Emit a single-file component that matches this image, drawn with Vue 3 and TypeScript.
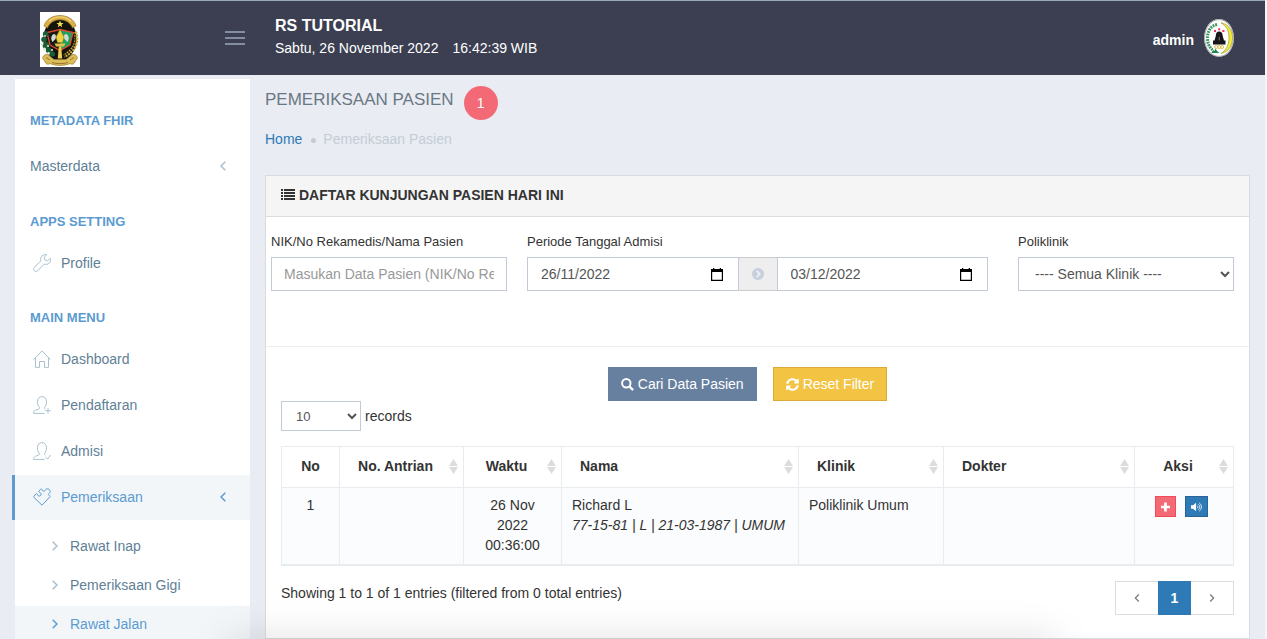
<script setup lang="ts">
import { ref } from 'vue'

type IconName = 'home' | 'follow' | 'check' | 'puzzle' | 'wrench'

interface MenuItem {
  label: string
  icon?: IconName
  arrow?: boolean
  active?: boolean
  children?: { label: string; active?: boolean }[]
}

interface MenuGroup {
  title: string
  items: MenuItem[]
}

const userShape =
  'M6.400 11.300C5 10 4.500 8 4.500 5.800 4.500 2.600 6.300.6 9 .6s4.500 2 4.500 5.200c0 2.200-.5 4.200-1.900 5.500-.4.900 0 1.500.8 1.800M6.400 11.300c.4.900 0 1.500-.8 1.800l-2.900 1.100C1.200 14.700.6 15.600.6 17.400h11'

const iconPaths: Record<IconName, string> = {
  home: 'M.6 9.600 9 .9l8.400 8.700M2.500 8v9.400h4V11.500h5v5.900h4V8',
  follow: userShape + 'M15 12v5.400M12.300 14.700h5.400',
  check: userShape + 'M12.500 14.900l2 2.300 3.100-4.200',
  wrench:
    'M13.600.7C11.300.2 8.700 1.300 7.900 3.700c-.4 1.100-.3 2.200 0 3.200L1.100 13.500c-1.800 2.200 1.200 5.200 3.400 3.400L11.200 10.100c1.700.7 3.700.3 5-1 1.300-1.300 1.600-3.100 1.100-4.700l-2.700 2.300-2.700-.7-.7-2.600z',
  puzzle:
    'M.8 8.300 3 6c.7-.6 1.300-.2 1.500.6.3 1.600 2.300 1.900 3.200.8.900-1 .4-2.600-1-2.900-.8-.2-1.300-.8-.7-1.500L7.600 1.300c.7-.6 1.400-.2 1.600.6.3 1.500 2.100 1.700 2.900.6.600-1.500 2.300-2.300 3.900-1.200 1.700 1.300 1.400 3.300 0 4.200-.9.700-.7 1.500.2 1.800.9.200 1.300.9.700 1.600L9 17.200.9 9.300c-.4-.3-.4-.7-.1-1z',
}

const menu: MenuGroup[] = [
  { title: 'METADATA FHIR', items: [{ label: 'Masterdata', arrow: true }] },
  { title: 'APPS SETTING', items: [{ label: 'Profile', icon: 'wrench' }] },
  {
    title: 'MAIN MENU',
    items: [
      { label: 'Dashboard', icon: 'home' },
      { label: 'Pendaftaran', icon: 'follow' },
      { label: 'Admisi', icon: 'check' },
      {
        label: 'Pemeriksaan',
        icon: 'puzzle',
        arrow: true,
        active: true,
        children: [
          { label: 'Rawat Inap' },
          { label: 'Pemeriksaan Gigi' },
          { label: 'Rawat Jalan', active: true },
        ],
      },
    ],
  },
]

const columns = [
  { key: 'no', label: 'No', sortable: false },
  { key: 'antrian', label: 'No. Antrian', sortable: true },
  { key: 'waktu', label: 'Waktu', sortable: true },
  { key: 'nama', label: 'Nama', sortable: true },
  { key: 'klinik', label: 'Klinik', sortable: true },
  { key: 'dokter', label: 'Dokter', sortable: true },
  { key: 'aksi', label: 'Aksi', sortable: true },
]

const visits = [
  {
    no: 1,
    queue: '',
    time: '26 Nov 2022 00:36:00',
    name: 'Richard L',
    detail: '77-15-81 | L | 21-03-1987 | UMUM',
    clinic: 'Poliklinik Umum',
    doctor: '',
  },
]

const keyword = ref('')
const startDate = ref('26/11/2022')
const endDate = ref('03/12/2022')
const clinic = ref('all')
const pageSize = ref('10')
</script>

<template>
  <div class="shell">
    <header class="topbar">
      <div class="brand">
        <svg class="crest" viewBox="0 0 40 55" role="img" aria-label="Logo">
          <rect width="40" height="55" fill="#fff" />
          <ellipse cx="20" cy="27" rx="16.500" ry="22" fill="#15140f" />
          <path d="M4 14C8 0 32 0 36 14l-3.500 2C28 5 12 5 7.500 16z" fill="#dcae45" stroke="#8a6a1c" stroke-width=".6" />
          <path d="M9 9.500C14 3.500 26 3.500 31 9.500" fill="none" stroke="#f3d988" stroke-width="1.200" />
          <path d="M20 8.500l1 2.400 2.500.2-2 1.600.7 2.500-2.200-1.400-2.200 1.400.7-2.500-2-1.600 2.500-.2z" fill="#f3df52" />
          <path d="M20 17.500 33 20.500 30 33 20 38.500 10 33 7 20.500z" fill="#191a18" />
          <path d="M20 17.500 33 20.500 30 33 20 38.500z" fill="#1fa05c" />
          <path d="M20 17.500 33 20.500 30 33 20 38.500 10 33 7 20.500z" fill="none" stroke="#dd4a2f" stroke-width="1.300" />
          <path d="M12.500 30c-2-3-1.500-7 1.500-8 2 0 2.500 3 1.500 5zM27.500 30c2-3 1.500-7-1.500-8-2 0-2.500 3-1.500 5z" fill="#d3dad6" />
          <path d="M20 17.500 24 25l-1.500 5.500h-5L16 25z" fill="#f0d33f" stroke="#9a7d20" stroke-width=".5" />
          <path d="M14.500 31.500h11l-1.500 3h-8z" fill="#e3c04a" />
          <path d="M18.800 34.500h2.400l1 12h-4.400z" fill="#f0cf55" />
          <g fill="#1c5e38">
            <circle cx="5.500" cy="22" r="2.700" /><circle cx="4" cy="27.500" r="2.800" /><circle cx="6" cy="33.500" r="3.400" />
            <circle cx="9" cy="38.500" r="3" /><circle cx="12.500" cy="42" r="2.500" />
          </g>
          <g fill="#dfe9db">
            <circle cx="2" cy="32" r="1.400" /><circle cx="4.500" cy="37" r="1.600" /><circle cx="8" cy="34" r="1" />
            <circle cx="8.500" cy="41.500" r="1.400" /><circle cx="5" cy="24" r=".9" /><circle cx="12" cy="38" r="1" />
          </g>
          <path d="M35 20c3 7 1 14-4 19-2 2-4 4-7 5" fill="none" stroke="#c9a93b" stroke-width="4" stroke-dasharray="2 .9" />
          <path d="M34.500 21c2 7 1 12-3 17-2 2-4 4-7 5.500" fill="none" stroke="#2a2610" stroke-width=".9" />
          <path d="M4.500 43c4-2 5 2 9.500 4.500h12C30.500 45 31.500 41 35.500 43c3 2 1.500 5-.5 6 0 3-3 4-5 2.500-5 2.500-15 2.500-20 0C8 53 5 52 5 49c-2-1-3.500-4-.5-6z" fill="#dcbd5a" stroke="#94752a" stroke-width=".7" />
          <path d="M12 50.500c5 1.500 11 1.500 16 0M6 45.500l4 2.500M34 45.500l-4 2.500" fill="none" stroke="#81651f" stroke-width=".8" />
        </svg>
        <button class="burger" type="button" aria-label="Toggle menu">
          <span></span><span></span><span></span>
        </button>
      </div>
      <div class="hospital">
        <strong>RS TUTORIAL</strong>
        <p><span>Sabtu, 26 November 2022</span><span>16:42:39 WIB</span></p>
      </div>
      <a class="user" href="#">
        <strong>admin</strong>
        <svg class="avatar" viewBox="0 0 30 38" aria-hidden="true">
          <ellipse cx="15" cy="19" rx="15" ry="19" fill="#fff" />
          <ellipse cx="15" cy="19" rx="14.400" ry="18.400" fill="none" stroke="#555" stroke-width=".5" />
          <path d="M13 5.500C6 7 3.500 13 3.500 19s2 9 5 12" fill="none" stroke="#3a9763" stroke-width="3" stroke-dasharray="1.800 .9" />
          <path d="M17 3.800C25 5 28.500 12 28.500 19S25 33 17 34.500c4-2.500 8-7.500 8-15.500S22 7 17 3.800z" fill="#f1ea3c" stroke="#8d8a2a" stroke-width=".6" />
          <path d="M7.500 34l1.500-3 1.500 1 1-2.500 1.500 2.500 2.500 2z" fill="#17874a" />
          <path d="M10 12h2M14.200 10.300h2M18.400 12h2" stroke="#ee3350" stroke-width="1.900" />
          <path d="M15.200 12.500c2.200 0 3.300 1.400 3.500 4.500l1.300 4.500h1.500v4H9v-4h1.500l1.300-4.500c.2-3.100 1.200-4.500 3.400-4.500z" fill="#15151a" />
          <path d="M15.200 18v3.500" stroke="#999" stroke-width=".8" />
          <g fill="none" stroke="#d8b73c" stroke-width=".9">
            <circle cx="12.300" cy="28" r="1.500" /><circle cx="15.200" cy="28" r="1.500" /><circle cx="18.100" cy="28" r="1.500" />
          </g>
        </svg>
      </a>
    </header>

    <div class="body">
      <nav class="sidebar" aria-label="Menu">
        <section v-for="group in menu" :key="group.title" class="group">
          <h3>{{ group.title }}</h3>
          <ul>
            <li v-for="item in group.items" :key="item.label">
              <a href="#" class="item" :class="{ active: item.active }">
                <svg v-if="item.icon" class="item-icon" viewBox="0 0 18 18" aria-hidden="true">
                  <path :d="iconPaths[item.icon]" />
                </svg>
                <span>{{ item.label }}</span>
                <svg v-if="item.arrow" class="arrow" viewBox="0 0 6 10" aria-hidden="true">
                  <path d="M5.300.8 1 5l4.300 4.200" />
                </svg>
              </a>
              <ul v-if="item.children" class="submenu">
                <li v-for="child in item.children" :key="child.label">
                  <a href="#" class="subitem" :class="{ active: child.active }">
                    <svg class="bullet" viewBox="0 0 6 10" aria-hidden="true">
                      <path d="M.7.8 5 5 .7 9.200" />
                    </svg>
                    {{ child.label }}
                  </a>
                </li>
              </ul>
            </li>
          </ul>
        </section>
      </nav>

      <main class="content">
        <div class="title-row">
          <h1>PEMERIKSAAN PASIEN</h1>
          <span class="count">1</span>
        </div>
        <nav class="crumbs" aria-label="Breadcrumb">
          <a href="#">Home</a>
          <i class="dot"></i>
          <span>Pemeriksaan Pasien</span>
        </nav>

        <section class="panel">
          <h2 class="panel-head">
            <svg viewBox="0 0 14 12" aria-hidden="true">
              <path d="M0 0h2v2H0zM3 0h11v2H3zM0 3h2v2H0zM3 3h11v2H3zM0 6h2v2H0zM3 6h11v2H3zM0 9h2v2H0zM3 9h11v2H3z" />
            </svg>
            DAFTAR KUNJUNGAN PASIEN HARI INI
          </h2>

          <form class="filters" @submit.prevent>
            <div class="field">
              <label for="keyword">NIK/No Rekamedis/Nama Pasien</label>
              <input id="keyword" v-model="keyword" class="control" type="text" placeholder="Masukan Data Pasien (NIK/No Rekamedis/Nama)" />
            </div>
            <div class="field">
              <label for="start">Periode Tanggal Admisi</label>
              <div class="range">
                <div class="date">
                  <input id="start" v-model="startDate" type="text" />
                  <button type="button" aria-label="Pilih tanggal awal">
                    <svg viewBox="0 0 12 13"><path d="M2 0h1.300v1h5.400V0H10v1h2v12H0V1h2zM1.200 4v7.800h9.600V4z" fill-rule="evenodd" /></svg>
                  </button>
                </div>
                <span class="between">
                  <svg viewBox="0 0 12 12" aria-hidden="true">
                    <circle cx="6" cy="6" r="6" fill="#c6cfdc" />
                    <path d="M4.700 3 7.700 6l-3 3" fill="none" stroke="#eee" stroke-width="1.800" />
                  </svg>
                </span>
                <div class="date">
                  <input v-model="endDate" type="text" aria-label="Tanggal akhir" />
                  <button type="button" aria-label="Pilih tanggal akhir">
                    <svg viewBox="0 0 12 13"><path d="M2 0h1.300v1h5.400V0H10v1h2v12H0V1h2zM1.200 4v7.800h9.600V4z" fill-rule="evenodd" /></svg>
                  </button>
                </div>
              </div>
            </div>
            <div class="field clinic">
              <label for="clinic">Poliklinik</label>
              <select id="clinic" v-model="clinic" class="control">
                <option value="all">---- Semua Klinik ----</option>
              </select>
            </div>
          </form>

          <div class="actions">
            <button type="button" class="btn search">
              <svg viewBox="0 0 13 13" aria-hidden="true">
                <circle cx="5.300" cy="5.300" r="4.200" fill="none" stroke="#fff" stroke-width="2" />
                <path d="M8.500 8.500l3.600 3.600" stroke="#fff" stroke-width="2.400" />
              </svg>
              Cari Data Pasien
            </button>
            <button type="button" class="btn reset">
              <svg viewBox="0 0 512 512" aria-hidden="true">
                <path fill="#fff" d="M370.720 133.280C339.458 104.008 298.888 87.962 255.848 88c-77.458.068-144.328 53.178-162.791 126.850-1.344 5.363-6.122 9.150-11.651 9.150H24.103c-7.498 0-13.194-6.807-11.807-14.176C33.933 94.924 134.813 8 256 8c66.448 0 126.791 26.136 171.315 68.685L463.030 40.970C478.149 25.851 504 36.559 504 57.941V192c0 13.255-10.745 24-24 24H345.941c-21.382 0-32.090-25.851-16.971-40.971l41.750-41.749zM32 296h134.059c21.382 0 32.090 25.851 16.971 40.971l-41.750 41.750c31.262 29.273 71.835 45.319 114.876 45.280 77.418-.070 144.315-53.144 162.787-126.849 1.344-5.363 6.122-9.150 11.651-9.150h57.304c7.498 0 13.194 6.807 11.807 14.176C478.067 417.076 377.187 504 256 504c-66.448 0-126.791-26.136-171.315-68.685L48.970 471.030C33.851 486.149 8 475.441 8 454.059V320c0-13.255 10.745-24 24-24z" />
              </svg>
              Reset Filter
            </button>
          </div>

          <div class="listing">
            <label class="length">
              <select v-model="pageSize">
                <option>10</option>
                <option>25</option>
                <option>50</option>
              </select>
              records
            </label>

            <table>
              <colgroup>
                <col v-for="column in columns" :key="column.key" :class="'w-' + column.key" />
              </colgroup>
              <thead>
                <tr>
                  <th v-for="column in columns" :key="column.key" scope="col" :class="['c-' + column.key, { sortable: column.sortable }]">
                    {{ column.label }}
                    <svg v-if="column.sortable" class="sort" viewBox="0 0 9 15" aria-hidden="true">
                      <path d="M4.500 0 9 7H0zM0 8h9l-4.500 7z" />
                    </svg>
                  </th>
                </tr>
              </thead>
              <tbody>
                <tr v-for="visit in visits" :key="visit.no">
                  <td class="c-no">{{ visit.no }}</td>
                  <td>{{ visit.queue }}</td>
                  <td class="c-waktu">{{ visit.time }}</td>
                  <td class="c-nama">{{ visit.name }}<br /><em>{{ visit.detail }}</em></td>
                  <td>{{ visit.clinic }}</td>
                  <td>{{ visit.doctor }}</td>
                  <td class="c-aksi">
                    <div class="row-actions">
                      <button type="button" class="mini add" aria-label="Tambah">
                        <svg viewBox="0 0 10 10"><path d="M3.500 0h3v3.500H10v3H6.500V10h-3V6.500H0v-3h3.500z" fill="#fff" /></svg>
                      </button>
                      <button type="button" class="mini call" aria-label="Panggil">
                        <svg viewBox="0 0 12 10">
                          <path d="M0 3h2.300L5.500.3v9.400L2.300 7H0z" fill="#fff" />
                          <path d="M6.700 3.500c1 .8 1 2.200 0 3M7.900 1.900c2.200 1.500 2.200 4.700 0 6.200M9 .5c3.200 2.200 3.200 6.800 0 9" fill="none" stroke="#fff" stroke-width=".9" />
                        </svg>
                      </button>
                    </div>
                  </td>
                </tr>
              </tbody>
            </table>

            <div class="foot">
              <p>Showing 1 to 1 of 1 entries (filtered from 0 total entries)</p>
              <div class="pager">
                <a href="#" aria-label="Sebelumnya"><svg viewBox="0 0 6 10"><path d="M4.800 1.500 1.300 5l3.500 3.500" /></svg></a>
                <a href="#" class="current">1</a>
                <a href="#" aria-label="Berikutnya"><svg viewBox="0 0 6 10"><path d="M1.200 1.500 4.700 5 1.200 8.500" /></svg></a>
              </div>
            </div>
          </div>
        </section>
      </main>
    </div>
  </div>
</template>

<style>
body {
  margin: 0;
  background: #e9ecf3;
}
</style>

<style scoped>
* {
  box-sizing: border-box;
}
.shell {
  position: relative;
  display: flex;
  flex-direction: column;
  height: 100vh;
  overflow: hidden;
  border-right: 2px solid #f4f5f8;
  background: #e9ecf3;
  color: #333;
  font-family: "Liberation Sans", Arial, Helvetica, sans-serif;
  font-size: 14px;
  line-height: 20px;
}
/* soft shadow along the lower edge of the window */
.shell::after {
  content: '';
  position: absolute;
  top: 100%;
  left: 228px;
  right: 208px;
  height: 40px;
  box-shadow: 0 0 40px rgba(0, 0, 0, 0.13);
  pointer-events: none;
}
a {
  text-decoration: none;
}
h1,
h2,
h3,
p,
ul {
  margin: 0;
  padding: 0;
}
ul {
  list-style: none;
}
button,
input,
select {
  font-family: inherit;
  font-size: 14px;
}
button {
  cursor: pointer;
}

.topbar {
  display: flex;
  flex: none;
  height: 75px;
  padding-right: 31px;
  border-top: 1px solid #97a9bd;
  background: #3b3f51;
  color: #fff;
}
.brand {
  display: flex;
  align-items: flex-start;
  justify-content: space-between;
  width: 275px;
  padding: 11px 30px 0 40px;
}
.crest {
  width: 40px;
  height: 55px;
}
.burger {
  display: flex;
  flex-direction: column;
  gap: 4px;
  margin-top: 19px;
  padding: 0;
  border: 0;
  background: none;
}
.burger span {
  width: 20px;
  height: 2px;
  background: #848ea3;
}
.hospital {
  flex: 1;
  padding-top: 15px;
}
.hospital strong {
  display: block;
  font-size: 16px;
}
.hospital p {
  display: flex;
  gap: 14px;
  margin-top: 2px;
}
.user {
  display: flex;
  align-items: center;
  gap: 10px;
  color: #fff;
}
.user strong {
  padding-top: 4px;
}
.avatar {
  width: 30px;
  height: 38px;
}

.body {
  display: flex;
  flex: 1;
  min-height: 0;
}
.sidebar {
  flex: none;
  width: 235px;
  margin: 4px 0 0 15px;
  padding-top: 11px;
  background: #fff;
}
.group h3 {
  padding: 23px 15px 12px;
  color: #5b9bd1;
  font-size: 13px;
  line-height: 15px;
}
.group:first-child {
  padding-bottom: 1px;
}
.group:first-child h3 {
  padding-bottom: 16px;
}
.item {
  display: flex;
  align-items: center;
  height: 45px;
  margin-bottom: 1px;
  padding: 0 24px 2px 15px;
  color: #608096;
}
.item-icon {
  width: 18px;
  height: 18px;
  margin: 0 10px 0 3px;
  fill: none;
  stroke: #a9c1cf;
  stroke-width: 1;
}
.arrow {
  width: 6px;
  height: 10px;
  margin-left: auto;
}
.arrow,
.bullet {
  fill: none;
  stroke: #a7bdcd;
  stroke-width: 1.5;
}
.item.active {
  margin-left: -3px;
  border-left: 3px solid #5b9bd1;
  background: #f2f6f9;
}
.active {
  color: #5b9bd1;
}
.active svg {
  stroke: #5b9bd1;
}
.submenu {
  padding-top: 7px;
}
.subitem {
  display: flex;
  align-items: center;
  gap: 12px;
  height: 38px;
  margin-bottom: 1px;
  padding: 0 15px 2px 37px;
  color: #608096;
}
.subitem.active {
  background: #f2f6f9;
  color: #5b9bd1;
}
.bullet {
  width: 6px;
  height: 10px;
}

.content {
  display: flex;
  flex: 1;
  flex-direction: column;
  min-width: 0;
  padding: 11px 15px 0;
}
.title-row {
  display: flex;
  gap: 10px;
  height: 34px;
}
h1 {
  color: #697882;
  font-size: 17px;
  font-weight: 400;
  line-height: 28px;
}
.count {
  width: 34px;
  height: 34px;
  border-radius: 50%;
  background: #f36a76;
  color: #fff;
  line-height: 34px;
  text-align: center;
}
.crumbs {
  display: flex;
  align-items: center;
  margin-top: 9px;
  color: #c4ccd5;
}
.crumbs a {
  color: #2d7ab6;
}
.dot {
  width: 5px;
  height: 5px;
  margin: 3px 7px 0 9px;
  border-radius: 50%;
  background: #c4ccd5;
}

.panel {
  flex: 1;
  margin-top: 26px;
  border: 1px solid #d9dbde;
  background: #fff;
}
.panel-head {
  display: flex;
  align-items: center;
  gap: 4px;
  height: 41px;
  padding: 0 15px 2px;
  border-bottom: 1px solid #ddd;
  background: #f5f5f5;
  font-size: 14px;
}
.panel-head svg {
  width: 14px;
  height: 12px;
  fill: #333;
}
.filters {
  display: grid;
  grid-template-columns: 236fr 461fr 226fr;
  column-gap: 20px;
  padding: 15px 15px 55px 5px;
  border-bottom: 1px solid #eee;
}
.field {
  min-width: 0;
}
.field label {
  display: block;
  margin-bottom: 5px;
  font-size: 13px;
}
.clinic {
  padding-left: 10px;
}
.control {
  width: 100%;
  height: 34px;
  padding: 0 12px;
  border: 1px solid #c2cad8;
  border-radius: 0;
  background: #fff;
  color: #555;
}
.control::placeholder {
  color: #999;
}
select.control {
  padding-right: 4px;
}
.range {
  display: flex;
}
.date {
  display: flex;
  flex: 1;
  align-items: center;
  min-width: 0;
  height: 34px;
  padding: 0 15px 0 13px;
  border: 1px solid #c2cad8;
}
.date input {
  flex: 1;
  width: 0;
  padding: 0;
  border: 0;
  background: none;
  color: #555;
}
.date button {
  display: flex;
  padding: 0;
  border: 0;
  background: none;
}
.date svg {
  width: 12px;
  height: 13px;
}
.between {
  display: flex;
  align-items: center;
  justify-content: center;
  width: 38px;
  border: solid #ccc;
  border-width: 1px 0;
  background: #eee;
}
.between svg {
  width: 12px;
  height: 12px;
}

.actions {
  display: flex;
  justify-content: center;
  gap: 16px;
  padding: 20px 20px 0 0;
}
.btn {
  display: flex;
  align-items: center;
  gap: 4px;
  height: 34px;
  padding: 0 12px;
  border: 1px solid;
  color: #fff;
}
.btn svg {
  width: 13px;
  height: 13px;
}
.search {
  border-color: #67809f;
  background: #67809f;
}
.reset {
  border-color: #dbab34;
  background: #f3c444;
}

.listing {
  padding: 0 15px;
}
.length {
  display: inline-flex;
  align-items: center;
  gap: 4px;
}
.length select {
  width: 80px;
  height: 30px;
  padding: 0 0 0 10px;
  border: 1px solid #c2cad8;
  border-radius: 0;
  background: #fff;
  color: #555;
  font-size: 13px;
}
table {
  width: 100%;
  margin-top: 15px;
  border: 1px solid #e7ecf1;
  border-bottom-width: 2px;
  border-collapse: collapse;
  table-layout: fixed;
}
.w-no {
  width: 58px;
}
.w-antrian {
  width: 124px;
}
.w-waktu {
  width: 98px;
}
.w-nama {
  width: 237px;
}
.w-klinik {
  width: 145px;
}
.w-aksi {
  width: 99px;
}
th,
td {
  border: 1px solid #e7ecf1;
  text-align: left;
}
th {
  position: relative;
  height: 41px;
  padding: 0 18px 2px;
}
th.sortable {
  padding-right: 30px;
  white-space: nowrap;
}
td {
  padding: 7px 10px 9px;
  vertical-align: top;
}
tbody tr {
  background: #fbfcfd;
}
.c-no,
.c-antrian,
.c-waktu,
.c-aksi {
  text-align: center;
}
td.c-waktu {
  padding-right: 20px;
  padding-left: 20px;
}
td.c-nama {
  white-space: nowrap;
}
.sort {
  position: absolute;
  top: 12px;
  right: 5px;
  width: 9px;
  height: 15px;
  fill: #dcdcdc;
}
.row-actions {
  display: flex;
  justify-content: center;
  gap: 9px;
  padding: 1px 6px 0 0;
}
.mini {
  display: flex;
  align-items: center;
  justify-content: center;
  height: 21px;
  padding: 0 5px;
  border: 1px solid;
}
.mini svg {
  height: 10px;
}
.add {
  width: 21px;
  border-color: #f14a58;
  background: #f36a76;
}
.call {
  width: 23px;
  border-color: #2a6396;
  background: #2d7ab6;
}
.foot {
  display: flex;
  align-items: flex-start;
  justify-content: space-between;
  margin-top: 15px;
}
.foot p {
  padding-top: 2px;
}
.pager {
  display: flex;
  height: 34px;
  border: 1px solid #ddd;
}
.pager a {
  display: flex;
  align-items: center;
  justify-content: center;
  width: 42px;
}
.pager svg {
  width: 6px;
  height: 10px;
  fill: none;
  stroke: #777;
  stroke-width: 1.2;
}
.pager .current {
  width: 33px;
  margin: -1px 0;
  background: #2d7ab6;
  color: #fff;
  font-weight: 700;
}
</style>
